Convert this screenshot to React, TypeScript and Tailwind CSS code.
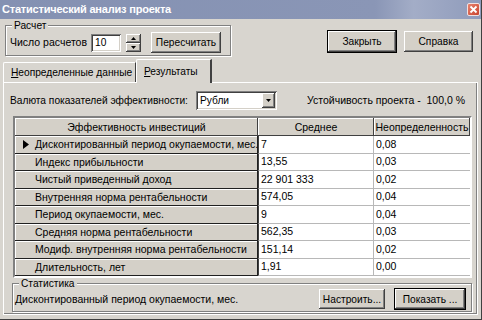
import React from "react";

const raised =
  "bg-[#d4d0c8] shadow-[inset_-1px_-1px_0_#404040,inset_1px_1px_0_#ffffff,inset_-2px_-2px_0_#808080]";
const sunken =
  "bg-white shadow-[inset_1px_1px_0_#808080,inset_-1px_-1px_0_#ffffff,inset_2px_2px_0_#404040,inset_-2px_-2px_0_#d4d0c8]";

function Btn({ label, w, def }: { label: string; w: string; def?: boolean }) {
  return (
    <div
      className={`${w} h-[21px] flex items-center justify-center ${raised} ${
        def ? "outline outline-1 outline-black" : ""
      }`}
    >
      {label}
    </div>
  );
}

export default function App() {
  const rows = [
    ["Дисконтированный период окупаемости, мес.", "7", "0,08"],
    ["Индекс прибыльности", "13,55", "0,03"],
    ["Чистый приведенный доход", "22 901 333", "0,02"],
    ["Внутренняя норма рентабельности", "574,05", "0,04"],
    ["Период окупаемости, мес.", "9", "0,04"],
    ["Средняя норма рентабельности", "562,35", "0,03"],
    ["Модиф. внутренняя норма рентабельности", "151,14", "0,02"],
    ["Длительность, лет", "1,91", "0,00"],
  ];
  return (
    <div className="w-[482px] h-[320px] overflow-hidden whitespace-nowrap bg-[#d8d5cf] text-[10.2px] leading-[13px] text-black font-['Liberation_Sans',Arial,sans-serif] flex flex-col border-r border-b border-[#404040]">
      {/* Title bar */}
      <div className="h-[19px] shrink-0 flex items-center justify-between pl-[2px] pr-[1px] bg-[linear-gradient(90deg,#8491b2_0%,#8a96b6_78%,#a3adc7_86%,#8f9bbb_100%)]">
        <span className="text-white font-bold text-[11px] tracking-[-0.2px]">
          Статистический анализ проекта
        </span>
        <div className="w-[13px] h-[13px] rounded-[2px] border border-[#f0e0e0] bg-[linear-gradient(135deg,#e8826e,#c8442e)] flex items-center justify-center">
          <svg width="9" height="9" viewBox="0 0 9 9">
            <path d="M1.5 1.5L7.5 7.5M7.5 1.5L1.5 7.5" stroke="#fff" strokeWidth="1.8" />
          </svg>
        </div>
      </div>

      {/* Top section */}
      <div className="h-[41px] shrink-0 flex items-start">
        <fieldset className="ml-[5px] w-[226px] h-[37px] border border-[#808080] shadow-[inset_1px_1px_0_#ffffff,1px_1px_0_#ffffff]">
          <legend className="ml-[6px] px-[2px] leading-[13px] bg-[#d8d5cf]">Расчет</legend>
          <div className="flex items-center pl-[4px]">
            <span className="w-[81px] text-[10.5px]">Число расчетов</span>
            <div className={`w-[30px] h-[18px] ${sunken} flex items-center pl-[4px]`}>10</div>
            <div className="ml-[5px] w-[15px] h-[18px] flex flex-col">
              <div className={`h-[9px] ${raised} flex items-center justify-center`}>
                <svg width="5" height="3" viewBox="0 0 5 3">
                  <path d="M2.5 0L5 3H0Z" fill="#000" />
                </svg>
              </div>
              <div className={`h-[9px] ${raised} flex items-center justify-center`}>
                <svg width="5" height="3" viewBox="0 0 5 3">
                  <path d="M0 0H5L2.5 3Z" fill="#000" />
                </svg>
              </div>
            </div>
            <div className="ml-[10px]">
              <Btn label="Пересчитать" w="w-[70px]" />
            </div>
          </div>
        </fieldset>
        <div className="ml-auto mt-[12px] mr-[8px] flex gap-[8px]">
          <Btn label="Закрыть" w="w-[68px]" def />
          <Btn label="Справка" w="w-[69px]" />
        </div>
      </div>

      {/* Tabs */}
      <div className="h-[22px] shrink-0 flex items-end pl-[3px]">
        <div className="w-[133px] h-[20px] flex items-center pl-[7px] border-t border-l border-white border-r border-r-[#404040] rounded-tl-[2px]">
          <span>
            <span className="underline">Н</span>еопределенные данные
          </span>
        </div>
        <div className="relative z-10 -mb-[1px] w-[76px] h-[24px] flex items-center pl-[7px] pb-[1px] bg-[#d8d5cf] border-t border-l border-white border-r-2 border-r-[#404040] rounded-tl-[2px]">
          <span>
            <span className="underline">Р</span>езультаты
          </span>
        </div>
      </div>

      {/* Panel */}
      <div className="ml-[3px] mr-[3px] mb-[4px] flex-1 flex flex-col border-t border-l border-white border-r border-b border-[#404040] border-t-white border-l-white shadow-[inset_-1px_-1px_0_#808080]">
        <div className="mt-[8px] h-[19px] flex items-center pl-[6px] pr-[12px]">
          <span className="w-[186px]">Валюта показателей эффективности:</span>
          <div className={`w-[81px] h-[19px] ${sunken} flex items-center justify-between pl-[4px] pr-[2px]`}>
            <span>Рубли</span>
            <div className={`w-[13px] h-[15px] ${raised} flex items-center justify-center`}>
              <svg width="5" height="3" viewBox="0 0 5 3">
                <path d="M0 0H5L2.5 3Z" fill="#000" />
              </svg>
            </div>
          </div>
          <span className="ml-auto text-[10.5px]">Устойчивость проекта - &nbsp;100,0 %</span>
        </div>

        {/* Grid */}
        <div className="mt-[6px] ml-[9px] w-[459px] border-2 border-t-[#808080] border-l-[#808080] border-r-white border-b-white shadow-[inset_1px_1px_0_#404040] bg-white text-[10.5px]">
          <div className="h-[18px] flex">
            <div className={`w-[243px] ${raised} shadow-[inset_-1px_-1px_0_#404040,inset_1px_1px_0_#ffffff] flex items-center justify-center`}>
              Эффективность инвестиций
            </div>
            <div className={`w-[116px] ${raised} shadow-[inset_-1px_-1px_0_#404040,inset_1px_1px_0_#ffffff] flex items-center justify-center`}>
              Среднее
            </div>
            <div className={`flex-1 ${raised} shadow-[inset_-1px_-1px_0_#404040,inset_1px_1px_0_#ffffff] flex items-center justify-center`}>
              Неопределенность
            </div>
          </div>
          {rows.map((r, i) => (
            <div key={i} className="h-[17.5px] flex">
              <div className="w-[243px] overflow-hidden bg-[#d4d0c8] shadow-[inset_-1px_-1px_0_#202020,inset_1px_1px_0_#ffffff] flex items-center">
                <span className="w-[20px] shrink-0 flex justify-center pl-[2px]">
                  {i === 0 && (
                    <svg width="6" height="9" viewBox="0 0 6 9">
                      <path d="M0 0L6 4.5L0 9Z" fill="#000" />
                    </svg>
                  )}
                </span>
                <span>{r[0]}</span>
              </div>
              <div className="w-[116px] border-l border-[#404040] border-r border-r-[#b8b8b8] border-b border-b-[#b8b8b8] flex items-center pl-[2px]">
                {r[1]}
              </div>
              <div className="flex-1 border-b border-[#b8b8b8] flex items-center pl-[2px]">{r[2]}</div>
            </div>
          ))}
        </div>

        {/* Statistics */}
        <fieldset className="ml-[8px] w-[460px] border border-[#808080] shadow-[inset_1px_1px_0_#ffffff,1px_1px_0_#ffffff] pb-[2px]">
          <legend className="ml-[6px] px-[2px] leading-[11px] bg-[#d8d5cf]">Статистика</legend>
          <div className="h-[20px] flex items-center pl-[2px] pr-[6px]">
            <span className="text-[10.5px]">Дисконтированный период окупаемости, мес.</span>
            <div className="ml-auto flex gap-[10px]">
              <div className={`w-[66px] h-[20px] flex items-center justify-center ${raised}`}>Настроить...</div>
              <div className={`w-[70px] h-[20px] flex items-center justify-center ${raised} outline outline-1 outline-black`}>Показать ...</div>
            </div>
          </div>
        </fieldset>
      </div>
    </div>
  );
}
